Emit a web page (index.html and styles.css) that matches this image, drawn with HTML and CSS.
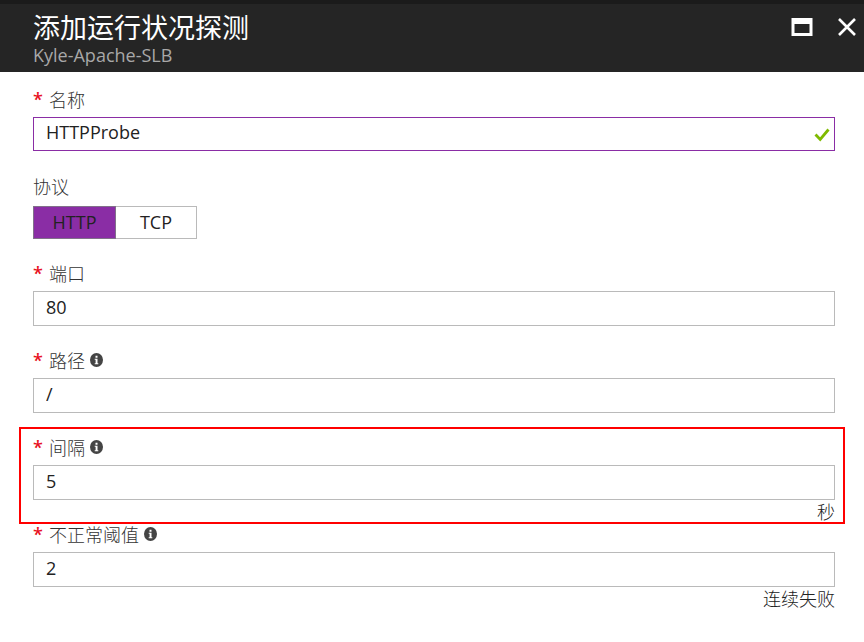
FILE: index.html
```html
<!DOCTYPE html>
<html lang="zh-CN">
<head>
<meta charset="utf-8">
<meta name="viewport" content="width=device-width, initial-scale=1">
<title>添加运行状况探测</title>
<link rel="stylesheet" href="styles.css">
</head>
<body>
<header class="blade-header">
  <div class="heading">
    <h1 class="title">添加运行状况探测</h1>
    <p class="subtitle">Kyle-Apache-SLB</p>
  </div>
  <div class="actions">
    <button class="icon-button" type="button" aria-label="最大化">
      <svg width="22" height="18" viewBox="0 0 22 18"><path fill="#fff" fill-rule="evenodd" d="M0.500 0h21v18H0.500zM3.500 6v9h15V6z"/></svg>
    </button>
    <button class="icon-button" type="button" aria-label="关闭">
      <svg width="18" height="18" viewBox="0 0 18 18"><path fill="none" stroke="#fff" stroke-width="2.600" d="M1 1l16 16M17 1L1 17"/></svg>
    </button>
  </div>
</header>
<main>
<form class="form">
  <div class="field">
    <label class="label" for="name"><span class="required">*</span>名称</label>
    <div class="control">
      <input class="input valid" id="name" type="text" value="HTTPProbe">
      <svg class="check" width="16" height="14" viewBox="0 0 16 14"><path fill="none" stroke="#7fba00" stroke-width="2.800" d="M1.500 6.500l4.700 5L14.500 1.500"/></svg>
    </div>
  </div>
  <div class="field">
    <span class="label" id="protocol">协议</span>
    <div class="segments" role="group" aria-labelledby="protocol">
      <button class="segment selected" type="button" aria-pressed="true">HTTP</button>
      <button class="segment" type="button" aria-pressed="false">TCP</button>
    </div>
  </div>
  <div class="field">
    <label class="label" for="port"><span class="required">*</span>端口</label>
    <input class="input" id="port" type="text" value="80">
  </div>
  <div class="field">
    <label class="label" for="path"><span class="required">*</span>路径
      <svg class="info" width="13" height="14" viewBox="0 0 13 14"><ellipse cx="6.500" cy="7" rx="6.500" ry="7" fill="#444"/><path fill="#fff" d="M5.500 2.800h2v2h-2zM4.700 5.800h2.800v4.500h.8v1H4.700v-1h.9V6.800h-.9z"/></svg>
    </label>
    <input class="input" id="path" type="text" value="/">
  </div>
  <div class="field highlighted">
    <label class="label" for="interval"><span class="required">*</span>间隔
      <svg class="info" width="13" height="14" viewBox="0 0 13 14"><ellipse cx="6.500" cy="7" rx="6.500" ry="7" fill="#444"/><path fill="#fff" d="M5.500 2.800h2v2h-2zM4.700 5.800h2.800v4.500h.8v1H4.700v-1h.9V6.800h-.9z"/></svg>
    </label>
    <input class="input" id="interval" type="text" value="5">
    <span class="unit">秒</span>
  </div>
  <div class="field">
    <label class="label" for="threshold"><span class="required">*</span>不正常阈值
      <svg class="info" width="13" height="14" viewBox="0 0 13 14"><ellipse cx="6.500" cy="7" rx="6.500" ry="7" fill="#444"/><path fill="#fff" d="M5.500 2.800h2v2h-2zM4.700 5.800h2.800v4.500h.8v1H4.700v-1h.9V6.800h-.9z"/></svg>
    </label>
    <input class="input" id="threshold" type="text" value="2">
    <span class="unit">连续失败</span>
  </div>
</form>
</main>
</body>
</html>
```

FILE: styles.css
```css
* {
  box-sizing: border-box;
}

body {
  margin: 0;
  background: #fff;
  color: #222;
  font-family: "Open Sans", "Noto Sans CJK SC", sans-serif;
  font-size: 18px;
}

button,
input {
  font: inherit;
  color: inherit;
}

.blade-header {
  display: flex;
  justify-content: space-between;
  align-items: flex-start;
  min-height: 72px;
  padding: 8px 8px 6px 33px;
  border-top: 4px solid #1b1b1b;
  background: #252525;
}

.title {
  margin: 0;
  color: #fff;
  font-size: 27px;
  font-weight: 400;
  line-height: 32px;
}

.subtitle {
  margin: 0;
  color: #a8a8a8;
  font-size: 18px;
  line-height: 22px;
}

.actions {
  display: flex;
  gap: 25px;
  padding-top: 6px;
}

.icon-button {
  display: flex;
  padding: 0;
  border: 0;
  background: none;
}

.form {
  padding: 18px 29px 0 33px;
}

.field {
  position: relative;
  display: flex;
  flex-direction: column;
  min-height: 87px;
}

.label {
  display: flex;
  align-items: center;
  height: 27px;
  padding-bottom: 10px;
  color: #333;
  font-weight: 300;
}

.required {
  width: 16px;
  color: #e81123;
  font-weight: 600;
}

.info {
  margin-left: 5px;
}

.control {
  position: relative;
  display: flex;
}

.input {
  width: 100%;
  height: 35px;
  padding: 0 12px 3px;
  border: 1px solid #bababa;
  border-radius: 0;
  background: #fff;
  outline: 0;
}

.valid {
  height: 34px;
  padding-right: 32px;
  padding-bottom: 4px;
  border-color: #8a2da5;
}

.check {
  position: absolute;
  top: 11px;
  right: 5px;
}

.segments {
  display: flex;
  margin-top: 2px;
}

.segment {
  width: 81px;
  height: 33px;
  padding: 0 0 2px;
  border: 1px solid #bababa;
  border-left: 0;
  background: #fff;
}

.selected {
  width: 83px;
  border: 1px solid #81718a;
  background: #8a2da5;
}

.unit {
  align-self: flex-end;
  height: 25px;
  line-height: 25px;
  font-weight: 300;
}

.highlighted::after {
  content: "";
  position: absolute;
  top: -11px;
  right: -10px;
  bottom: 1px;
  left: -14px;
  border: 2px solid #f00;
  pointer-events: none;
}
```
